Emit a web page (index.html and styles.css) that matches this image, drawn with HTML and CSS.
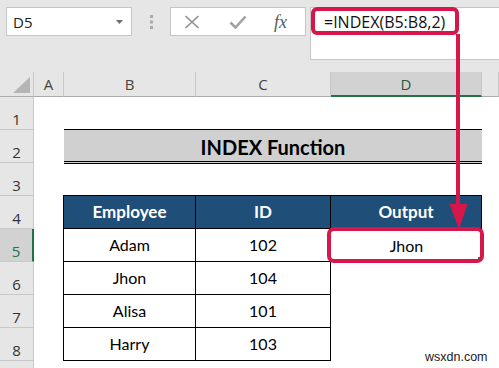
FILE: index.html
```html
<!DOCTYPE html>
<html>
<head>
<meta charset="utf-8">
<link rel="stylesheet" href="styles.css">
</head>
<body>
<div class="app">
  <div class="toolbar">
    <div class="namebox">
      <span>D5</span>
      <svg class="dd" width="7" height="4" viewBox="0 0 7 4"><path d="M0 0H7L3.5 4Z" fill="#6d6d6d"/></svg>
    </div>
    <div class="grip">
      <svg width="3" height="14" viewBox="0 0 3 14"><rect x="0" y="0" width="3" height="3" fill="#a9a9a9"/><rect x="0" y="5.5" width="3" height="3" fill="#a9a9a9"/><rect x="0" y="11" width="3" height="3" fill="#a9a9a9"/></svg>
    </div>
    <div class="fxbox">
      <svg class="ic-x" width="16" height="14" viewBox="0 0 16 14"><path d="M1.5 1L14.5 13M14.5 1L1.5 13" stroke="#8e8e8e" stroke-width="1.6" fill="none"/></svg>
      <svg class="ic-ok" width="18" height="14" viewBox="0 0 18 14"><path d="M1.5 7.5L6.5 12.5L16.5 1.5" stroke="#a2a2a2" stroke-width="2.6" fill="none"/></svg>
      <span class="fx">fx</span>
    </div>
    <div class="formula"><span class="ftext">=INDEX(B5:B8,2)</span></div>
  </div>

  <div class="sheet">
    <div class="ch corner"><svg width="17" height="16" viewBox="0 0 17 16"><path d="M17 0V16H0Z" fill="#b5b5b5"/></svg></div>
    <div class="ch">A</div>
    <div class="ch">B</div>
    <div class="ch">C</div>
    <div class="ch sel">D</div>
    <div class="ch"></div>

    <div class="rh">1</div><div></div><div></div><div></div><div></div><div></div>

    <div class="rh">2</div><div></div><div class="title">INDEX Function</div><div></div>

    <div class="rh">3</div><div></div><div></div><div></div><div></div><div></div>

    <div class="rh">4</div><div></div>
    <div class="th first">Employee</div><div class="th">ID</div><div class="th">Output</div><div></div>

    <div class="rh sel">5</div><div></div>
    <div class="td first">Adam</div><div class="td">102</div><div class="out">Jhon</div><div></div>

    <div class="rh">6</div><div></div>
    <div class="td first">Jhon</div><div class="td">104</div><div></div><div></div>

    <div class="rh">7</div><div></div>
    <div class="td first">Alisa</div><div class="td">101</div><div></div><div></div>

    <div class="rh">8</div><div></div>
    <div class="td first">Harry</div><div class="td">103</div><div></div><div></div>

    <div class="rh"></div><div></div><div></div><div></div><div></div><div></div>
  </div>

  <svg class="overlay" width="499" height="368" viewBox="0 0 499 368">
    <rect x="478" y="257" width="4" height="4" fill="#3d7a55"/>
    <rect x="313" y="9" width="144" height="24" rx="4" fill="none" stroke="#d7164a" stroke-width="4"/>
    <rect x="329" y="229" width="153" height="32" rx="5" fill="none" stroke="#d7164a" stroke-width="4"/>
    <path d="M458 34V206" stroke="#d7164a" stroke-width="4"/>
    <path d="M449.5 204H467.5L459 229Z" fill="#d7164a"/>
  </svg>
  <div class="watermark">wsxdn.com</div>
</div>
</body>
</html>
```

FILE: styles.css
```css
html, body {
  margin: 0;
  padding: 0;
}
body {
  width: 499px;
  height: 368px;
  overflow: hidden;
  background: #e6e6e6;
  font-family: "Open Sans", "Noto Sans", sans-serif;
}
.app {
  position: relative;
  width: 499px;
  height: 368px;
  overflow: hidden;
}

/* ---------- toolbar ---------- */
.toolbar {
  height: 72px;
  box-sizing: border-box;
  padding: 7px 0 0 6px;
  display: flex;
  align-items: flex-start;
}
.namebox {
  width: 126px;
  height: 29px;
  box-sizing: border-box;
  border: 1px solid #c6c6c6;
  background: #fff;
  display: flex;
  align-items: center;
  justify-content: space-between;
  padding: 0 8px 0 6px;
  font-size: 15px;
  color: #222;
}
.grip {
  width: 38px;
  height: 29px;
  display: flex;
  align-items: center;
  justify-content: center;
}
.fxbox {
  width: 136px;
  height: 29px;
  box-sizing: border-box;
  border: 1px solid #c6c6c6;
  background: #fff;
  display: flex;
  align-items: center;
  padding-left: 13px;
}
.ic-ok {
  margin-left: 29px;
}
.fx {
  margin-left: 27px;
  font-family: "Liberation Serif", "DejaVu Serif", serif;
  font-style: italic;
  font-size: 18px;
  color: #5a5a5a;
  line-height: 1;
  margin-top: 1px;
}
.formula {
  margin-left: 4px;
  flex: 1;
  height: 53px;
  box-sizing: border-box;
  border: 1px solid #c6c6c6;
  border-right: none;
  background: #fff;
  padding: 3px 0 0 13px;
}
.ftext {
  font-size: 16px;
  line-height: 22px;
  color: #111;
}

/* ---------- sheet ---------- */
.sheet {
  display: grid;
  grid-template-columns: 34px 30px 132px 135px 151px 1fr;
  grid-template-rows: 25px repeat(9, 33px);
  background: #fff;
  font-family: "Lato", "Open Sans", sans-serif;
}
.sheet > div {
  box-sizing: border-box;
}
.ch {
  background: #e6e6e6;
  border-right: 1px solid #c8c8c8;
  border-bottom: 1px solid #ababab;
  display: flex;
  align-items: center;
  justify-content: center;
  font-family: "Open Sans", sans-serif;
  font-size: 15px;
  color: #444;
}
.ch.corner {
  justify-content: flex-end;
  align-items: flex-end;
  padding: 0 3px 3px 0;
}
.ch.sel {
  background: #d2d2d2;
  border-bottom: 2px solid #217346;
  color: #1e5c3c;
}
.rh {
  background: #e6e6e6;
  border-right: 1px solid #c8c8c8;
  border-bottom: 1px solid #c8c8c8;
  display: flex;
  align-items: flex-end;
  justify-content: center;
  font-family: "Open Sans", sans-serif;
  font-size: 15px;
  line-height: 20px;
  color: #333;
}
.rh.sel {
  background: #d2d2d2;
  border-right: 2px solid #217346;
  color: #217346;
}
.title {
  grid-column: span 3;
  margin: -1px 0 -1px 0;
  background: #d0d0d0;
  border-top: 1px solid #000;
  border-bottom: 3px double #000;
  display: flex;
  align-items: center;
  justify-content: center;
  padding-top: 2px;
  font-weight: 700;
  font-size: 20px;
  line-height: 24px;
  color: #000;
}
.th {
  margin-top: -1px;
  background: #1f4e79;
  border-top: 1px solid #000;
  border-right: 1px solid #000;
  border-bottom: 1px solid #000;
  display: flex;
  align-items: center;
  justify-content: center;
  color: #fff;
  font-weight: 700;
  font-size: 17px;
  line-height: 20px;
}
.td {
  border-right: 1px solid #000;
  border-bottom: 1px solid #000;
  display: flex;
  align-items: center;
  justify-content: center;
  font-size: 16px;
  line-height: 20px;
  color: #000;
}
.first {
  margin-left: -1px;
  border-left: 1px solid #000;
}
.out {
  display: flex;
  align-items: center;
  justify-content: center;
  font-size: 16px;
  line-height: 20px;
  color: #000;
}

/* ---------- overlays ---------- */
.overlay {
  position: absolute;
  left: 0;
  top: 0;
  pointer-events: none;
}
.watermark {
  position: absolute;
  left: 425px;
  top: 350px;
  font-family: "Liberation Sans", Arial, sans-serif;
  font-size: 12.5px;
  line-height: 15px;
  color: #222;
}
```
